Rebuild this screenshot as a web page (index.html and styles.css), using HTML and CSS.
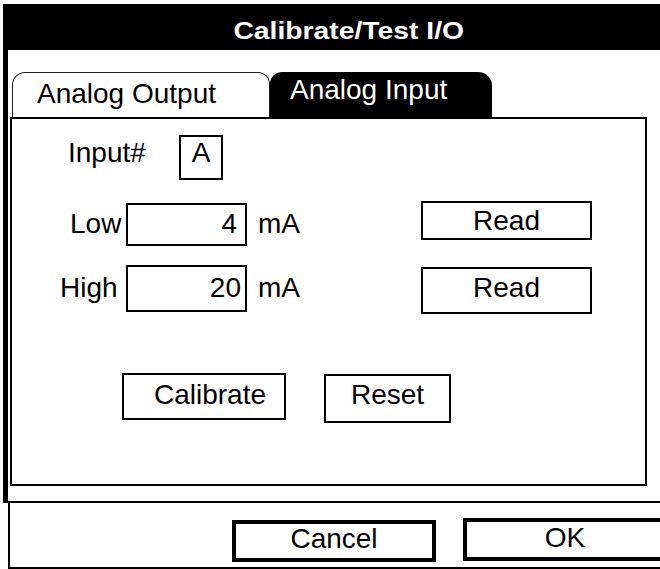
FILE: index.html
```html
<!DOCTYPE html>
<html lang="en">

<head>
    <meta charset="UTF-8">
    <meta name="viewport" content="width=device-width, initial-scale=1.0">
    <title>Calibrate/Test I/O</title>
    <link rel="stylesheet" href="styles.css">
</head>

<body>
    <div class="dialog">
        <div class="title"><span>Calibrate/Test I/O</span></div>
        <div class="main">
            <div class="tabs">
                <div class="tab">Analog Output</div>
                <div class="tab tab-active">Analog Input</div>
            </div>
            <div class="panel">
                <div class="row row-input">
                    <div class="label">Input#</div>
                    <div class="box box-input">A</div>
                </div>
                <div class="row row-low">
                    <div class="label">Low</div>
                    <div class="box field">4</div>
                    <div class="unit">mA</div>
                    <div class="box btn-read">Read</div>
                </div>
                <div class="row row-high">
                    <div class="label">High</div>
                    <div class="box field">20</div>
                    <div class="unit">mA</div>
                    <div class="box btn-read">Read</div>
                </div>
                <div class="row row-actions">
                    <div class="box btn-cal">Calibrate</div>
                    <div class="box btn-reset">Reset</div>
                </div>
            </div>
        </div>
        <div class="footer">
            <div class="footer-inner">
                <div class="box btn-cancel">Cancel</div>
                <div class="box btn-ok">OK</div>
            </div>
        </div>
    </div>
</body>

</html>
```

FILE: styles.css
```css
* {
    margin: 0;
    padding: 0;
    box-sizing: border-box;
}

body {
    overflow: hidden;
    background: #fff;
    color: #000;
    font-family: "Liberation Sans", Arial, sans-serif;
    font-size: 28px;
}

.dialog {
    width: 694px;
    padding: 4px 0 0 3px;
}

.title {
    height: 46px;
    padding-top: 14px;
    background: #000;
    color: #fff;
    text-align: center;
    font-size: 23px;
    font-weight: bold;
    line-height: 26px;
}

.title span {
    display: inline-block;
    transform: scaleX(1.23);
}

.main {
    height: 451px;
    padding-top: 22px;
    border-left: 5px solid #000;
}

.tabs {
    display: flex;
    height: 45px;
    margin-left: 4px;
}

.tab {
    width: 258px;
    height: 45px;
    padding: 6px 0 0 24px;
    border: 1px solid #222;
    border-bottom: 0;
    border-radius: 13px 12px 0 0;
    line-height: 30px;
}

.tab-active {
    width: 222px;
    padding: 3px 0 0 20px;
    border: 0;
    border-radius: 12px 14px 0 0;
    background: #000;
    color: #fff;
}

.panel {
    width: 637px;
    height: 369px;
    margin-left: 2px;
    border: 2px solid #000;
}

.row {
    display: flex;
    align-items: flex-start;
}

.label,
.unit {
    border: 2px solid transparent;
}

.box {
    border: 2px solid #000;
    text-align: center;
}

.row-input {
    margin-top: 16px;
    padding-left: 54px;
}

.row-input .label {
    width: 113px;
    height: 45px;
    line-height: 31px;
}

.box-input {
    width: 44px;
    height: 45px;
    line-height: 31px;
}

.field {
    width: 121px;
    text-align: right;
}

.unit {
    width: 165px;
    margin-left: 9px;
}

.btn-read {
    width: 171px;
}

.row-low {
    margin-top: 21px;
    padding-left: 56px;
}

.row-low .label,
.row-low .field,
.row-low .unit {
    height: 43px;
    margin-top: 2px;
    line-height: 37px;
}

.row-low .label {
    width: 58px;
}

.row-low .field {
    padding-right: 8px;
}

.row-low .btn-read {
    height: 39px;
    line-height: 35px;
}

.row-high {
    margin-top: 19px;
    padding-left: 46px;
}

.row-high .label,
.row-high .field,
.row-high .unit {
    height: 47px;
    line-height: 41px;
}

.row-high .label {
    width: 68px;
}

.row-high .field {
    padding-right: 4px;
}

.row-high .btn-read {
    height: 47px;
    margin-top: 2px;
    line-height: 37px;
}

.row-actions {
    margin-top: 59px;
    padding-left: 110px;
}

.btn-cal {
    width: 164px;
    height: 47px;
    padding-left: 12px;
    line-height: 39px;
}

.btn-reset {
    width: 127px;
    height: 49px;
    margin: 1px 0 0 38px;
    line-height: 37px;
}

.footer {
    border-top: 2px solid #000;
}

.footer-inner {
    display: flex;
    align-items: flex-start;
    height: 66px;
    margin-left: 5px;
    padding: 15px 0 0 222px;
    border-left: 2px solid #000;
    border-bottom: 2px solid #000;
}

.btn-cancel,
.btn-ok {
    width: 204px;
    border-width: 4px;
}

.btn-cancel {
    height: 42px;
    margin-top: 2px;
    line-height: 29px;
}

.btn-ok {
    height: 43px;
    margin-left: 27px;
    line-height: 31px;
}
```
